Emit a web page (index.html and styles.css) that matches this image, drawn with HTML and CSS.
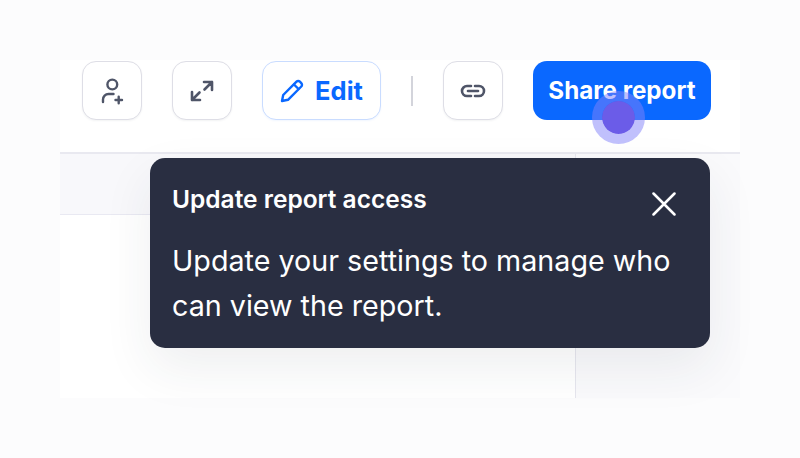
FILE: index.html
```html
<!DOCTYPE html>
<html lang="en">
<head>
    <meta charset="UTF-8">
    <title>Update report access</title>
    <link rel="stylesheet" href="styles.css">
</head>
<body>

    <div class="panel">
        <div class="toolbar">
            <button class="icon-btn">
                <svg width="26" height="30" viewBox="0 0 26 30" fill="none" stroke="#4f5568" stroke-width="2.400" stroke-linecap="round" stroke-linejoin="round">
                    <circle cx="13.300" cy="8.500" r="4.900"/>
                    <path d="M4 26v-2.500a5.500 5.500 0 0 1 5.500-5.500h5"/>
                    <path d="M16.500 24h6.500M19.700 20.700v6.500"/>
                </svg>
            </button>
            <button class="icon-btn">
                <svg width="24" height="24" viewBox="0 0 24 24" fill="none" stroke="#4f5568" stroke-width="2.600" stroke-linecap="round" stroke-linejoin="round">
                    <path d="M14 3h8v8M22 3l-7.500 7.500"/>
                    <path d="M2 13v8h8M2 21l7.500-7.500"/>
                </svg>
            </button>
            <button class="edit-btn">
                <svg width="24" height="24" viewBox="0 0 24 24" fill="none" stroke="#0a68ff" stroke-width="2.400" stroke-linejoin="round" stroke-linecap="round">
                    <path d="M2 22l1.200-6L16.500 2.700a2.400 2.400 0 0 1 3.400 0l1.400 1.400a2.400 2.400 0 0 1 0 3.400L8 20.800z"/>
                    <path d="M14 5.500l4.500 4.500"/>
                </svg>
                Edit
            </button>
            <div class="divider"></div>
            <button class="icon-btn">
                <svg width="26" height="14" viewBox="0 0 26 14" fill="none" stroke="#4f5568" stroke-width="2.600" stroke-linecap="round">
                    <path d="M11 2H7a5 5 0 0 0 0 10h4"/>
                    <path d="M15 2h4a5 5 0 0 1 0 10h-4"/>
                    <path d="M8 7h10"/>
                </svg>
            </button>
            <button class="share-btn">Share report</button>
        </div>

        <div class="content">
            <div class="main">
                <div class="band"></div>
            </div>
            <div class="side"></div>
        </div>

        <div class="tooltip">
            <div class="tooltip-head">
                <h2>Update report access</h2>
                <svg class="close" width="24" height="24" viewBox="0 0 24 24" stroke="#fff" stroke-width="2.500" stroke-linecap="round">
                    <path d="M1.500 1.500l21 21M22.500 1.500l-21 21"/>
                </svg>
            </div>
            <p>Update your settings to manage who can view the report.</p>
        </div>

        <div class="click-dot"></div>
    </div>

</body>
</html>
```

FILE: styles.css
```css
body {
    font-family: Inter, Lato, sans-serif;
    background-color: #fcfcfd;
    margin: 0;
    padding: 60px;
    overflow: hidden;
}

.panel {
    position: relative;
    width: 680px;
    height: 338px;
    background-color: white;
    display: flex;
    flex-direction: column;
}

.toolbar {
    height: 94px;
    box-sizing: border-box;
    padding: 1px 0 0 22px;
    display: flex;
    align-items: flex-start;
    gap: 30px;
    border-bottom: 2px solid #e9e9f0;
    flex: none;
}

button {
    font-family: inherit;
    height: 59px;
    box-sizing: border-box;
    display: flex;
    align-items: center;
    justify-content: center;
    background-color: white;
    padding: 0;
}

.icon-btn {
    width: 60px;
    border: 1.5px solid #dedee6;
    border-radius: 14px;
    box-shadow: 0 1px 2px rgba(41, 46, 65, 0.06);
}

.edit-btn {
    width: 119px;
    gap: 11px;
    color: #0a68ff;
    font-size: 25.500px;
    font-weight: 700;
    border: 1.5px solid #c9dcff;
    border-radius: 14px;
    box-shadow: 0 1px 2px rgba(10, 104, 255, 0.06);
}

.divider {
    width: 2px;
    height: 30px;
    margin-top: 15px;
    background-color: #d3d4db;
}

.share-btn {
    width: 178px;
    color: white;
    font-size: 24.200px;
    font-weight: 700;
    background-color: #0a68ff;
    border: none;
    border-radius: 14px;
}

.content {
    flex: 1;
    display: flex;
}

.main {
    width: 516px;
    box-sizing: border-box;
    border-right: 1px solid #e6e6ee;
}

.band {
    height: 60px;
    background-color: #f8f8fb;
    border-bottom: 1px solid #e9e9f2;
}

.side {
    flex: 1;
    background-color: #fafafc;
}

.tooltip {
    position: absolute;
    left: 90px;
    top: 98px;
    width: 560px;
    height: 190px;
    box-sizing: border-box;
    padding: 26px 22px 0;
    background-color: #292e41;
    color: white;
    border-radius: 15px;
    box-shadow: 0 20px 50px rgba(41, 46, 65, 0.08);
}

.tooltip-head {
    display: flex;
    justify-content: space-between;
    align-items: flex-start;
}

.tooltip-head h2 {
    margin: 0;
    font-size: 24.500px;
    line-height: 30px;
    font-weight: 600;
}

.close {
    margin: 8px 12px 0 0;
}

.tooltip p {
    margin: 22px 0 0;
    font-size: 28.700px;
    line-height: 45px;
    font-weight: 400;
}

.click-dot {
    position: absolute;
    left: 532px;
    top: 30.500px;
    width: 33px;
    height: 33px;
    border-radius: 50%;
    background-color: #6b5ce8;
    border: 10px solid rgba(130, 130, 250, 0.5);
    background-clip: padding-box;
}
```
